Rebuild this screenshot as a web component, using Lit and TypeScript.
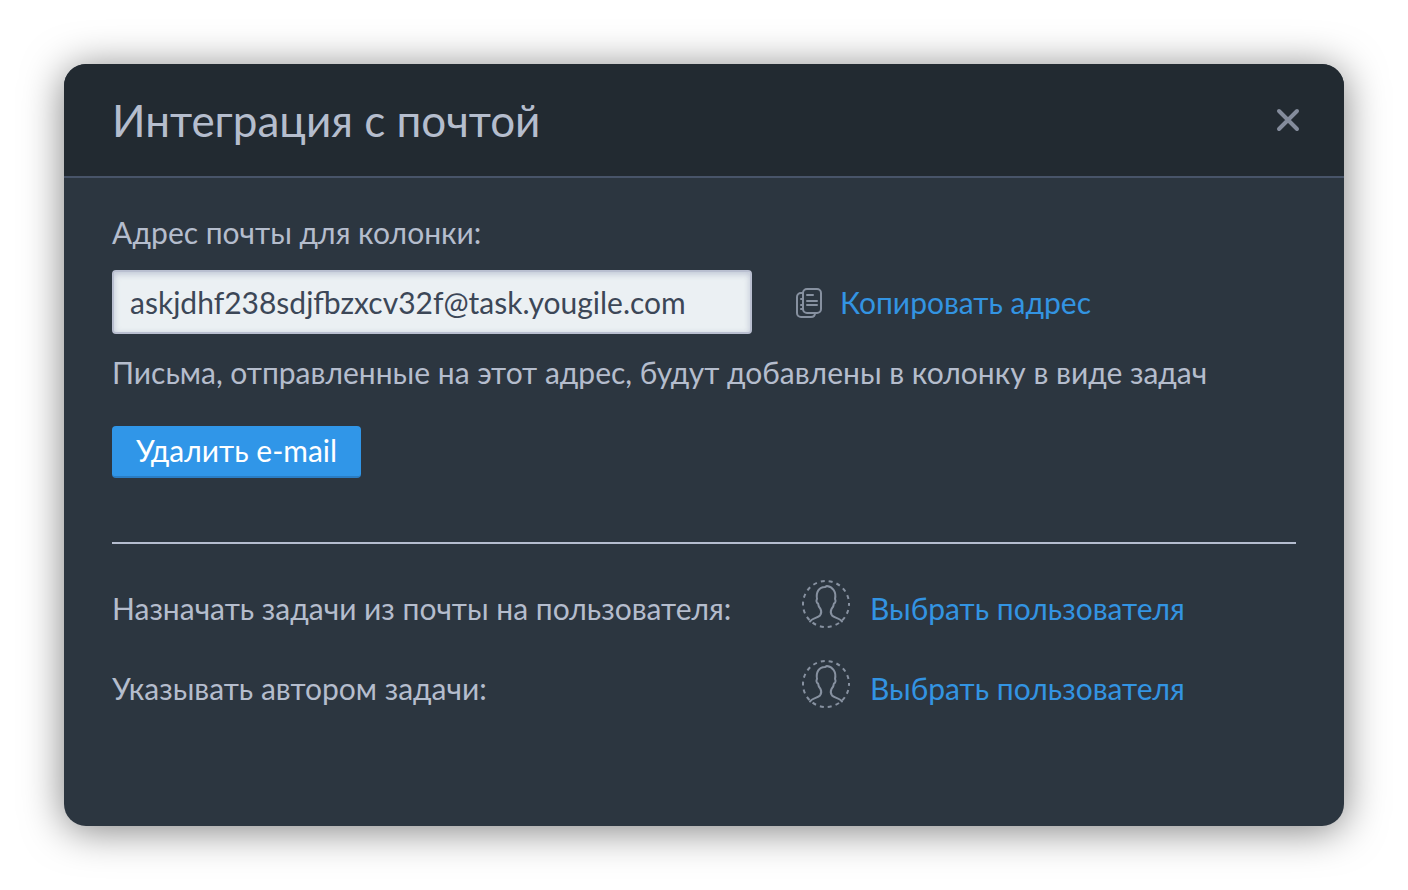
import { LitElement, html, css } from "lit";
import { customElement } from "lit/decorators.js";

@customElement("app-root")
export class AppRoot extends LitElement {
  static styles = css`
    :host {
      display: block;
      box-sizing: border-box;
      padding: 64px;
      background: #fff;
      font-family: Lato, "Open Sans", sans-serif;
      font-size: 30px;
      line-height: 40px;
      color: #b5bdcd;
    }
    * { box-sizing: border-box; }
    .dialog {
      display: flex;
      flex-direction: column;
      border-radius: 22px;
      background: #2c3640;
      box-shadow: 0 4px 40px rgba(0, 0, 0, 0.5);
    }
    .header {
      display: flex;
      align-items: center;
      justify-content: space-between;
      padding: 28px 40px 28px 48px;
      border-bottom: 2px solid #485469;
      border-radius: 22px 22px 0 0;
      background: #222a31;
    }
    h1 {
      margin: 0;
      font-size: 44px;
      line-height: 56px;
      font-weight: 400;
    }
    button {
      border: 0;
      padding: 0;
      background: none;
      font: inherit;
      color: #3394e2;
      cursor: pointer;
    }
    svg {
      display: block;
      flex: none;
      fill: none;
      stroke: currentColor;
      stroke-linecap: round;
      stroke-linejoin: round;
    }
    .close { color: #848c9c; }
    .body { padding: 34px 48px 118px; }
    .label { display: block; }
    .address {
      display: flex;
      align-items: center;
      gap: 44px;
      margin: 18px 0;
    }
    input {
      width: 640px;
      height: 64px;
      padding: 0 16px;
      border: 2px solid #b9bfd0;
      border-radius: 4px;
      background: #ebf0f3;
      box-shadow: inset 0 2px 6px rgba(120, 130, 165, 0.4);
      color: #3c4757;
      font: inherit;
    }
    .copy { display: flex; align-items: center; gap: 18px; }
    .copy svg, .pick svg { color: #8791a0; }
    p { margin: 0; }
    .remove {
      display: block;
      margin-top: 34px;
      padding: 4px 24px 6px;
      border-bottom: 2px solid #2a7dc4;
      border-radius: 4px;
      background: #3096e8;
      color: #fff;
    }
    hr { margin: 64px 0 36px; border: 0; border-top: 2px solid #b5bdcf; }
    .people {
      display: grid;
      grid-template-columns: 690px 1fr;
      align-items: end;
      row-gap: 32px;
    }
    .pick { display: flex; align-items: end; gap: 20px; }
    .pick .ring { stroke-linecap: butt; }
  `;

  private person() {
    return html`
      <svg width="48" height="48" viewBox="0 0 48 48" stroke-width="2" aria-hidden="true">
        <circle class="ring" cx="24" cy="24" r="23" stroke-dasharray="4 4.03" stroke-dashoffset="2" />
        <path d="M8 41.500C10 38 15.500 38 18 35.500C19.500 33.500 19.500 31 18.500 29C17 27.500 16.300 25.500 16 23.500C14.500 23 14 20.500 15 19C13.800 12 17 7 23 7L25 6C31 7 34.500 12 33 19C34 20.500 33.500 23 32 23.500C31.700 25.500 31 27.500 29.500 29C28.500 31 28.500 33.500 30 35.500C32.500 38 38 38 40 41.500" />
      </svg>
    `;
  }

  render() {
    return html`
      <section class="dialog" role="dialog" aria-labelledby="title">
        <header class="header">
          <h1 id="title">Интеграция с почтой</h1>
          <button class="close" aria-label="Закрыть">
            <svg width="32" height="32" viewBox="0 0 32 32" stroke-width="4"><path d="M7 7 25 25M25 7 7 25" /></svg>
          </button>
        </header>
        <div class="body">
          <label class="label" for="mail">Адрес почты для колонки:</label>
          <div class="address">
            <input id="mail" readonly value="askjdhf238sdjfbzxcv32f@task.yougile.com" />
            <button class="copy">
              <svg width="26" height="32" viewBox="0 -2 26 32" stroke-width="2" aria-hidden="true">
                <rect x="7" y="1" width="18" height="24" rx="4" />
                <path d="M7 5H5a4 4 0 0 0-4 4v16a4 4 0 0 0 4 4h10q4 0 4-4M11 7h6M11 13h10M11 17h10M5 11h1M5 17h1M5 21h1" />
              </svg>
              Копировать адрес
            </button>
          </div>
          <p>Письма, отправленные на этот адрес, будут добавлены в колонку в виде задач</p>
          <button class="remove">Удалить e-mail</button>
          <hr />
          <div class="people">
            <span>Назначать задачи из почты на пользователя:</span>
            <button class="pick">${this.person()}Выбрать пользователя</button>
            <span>Указывать автором задачи:</span>
            <button class="pick">${this.person()}Выбрать пользователя</button>
          </div>
        </div>
      </section>
    `;
  }
}
